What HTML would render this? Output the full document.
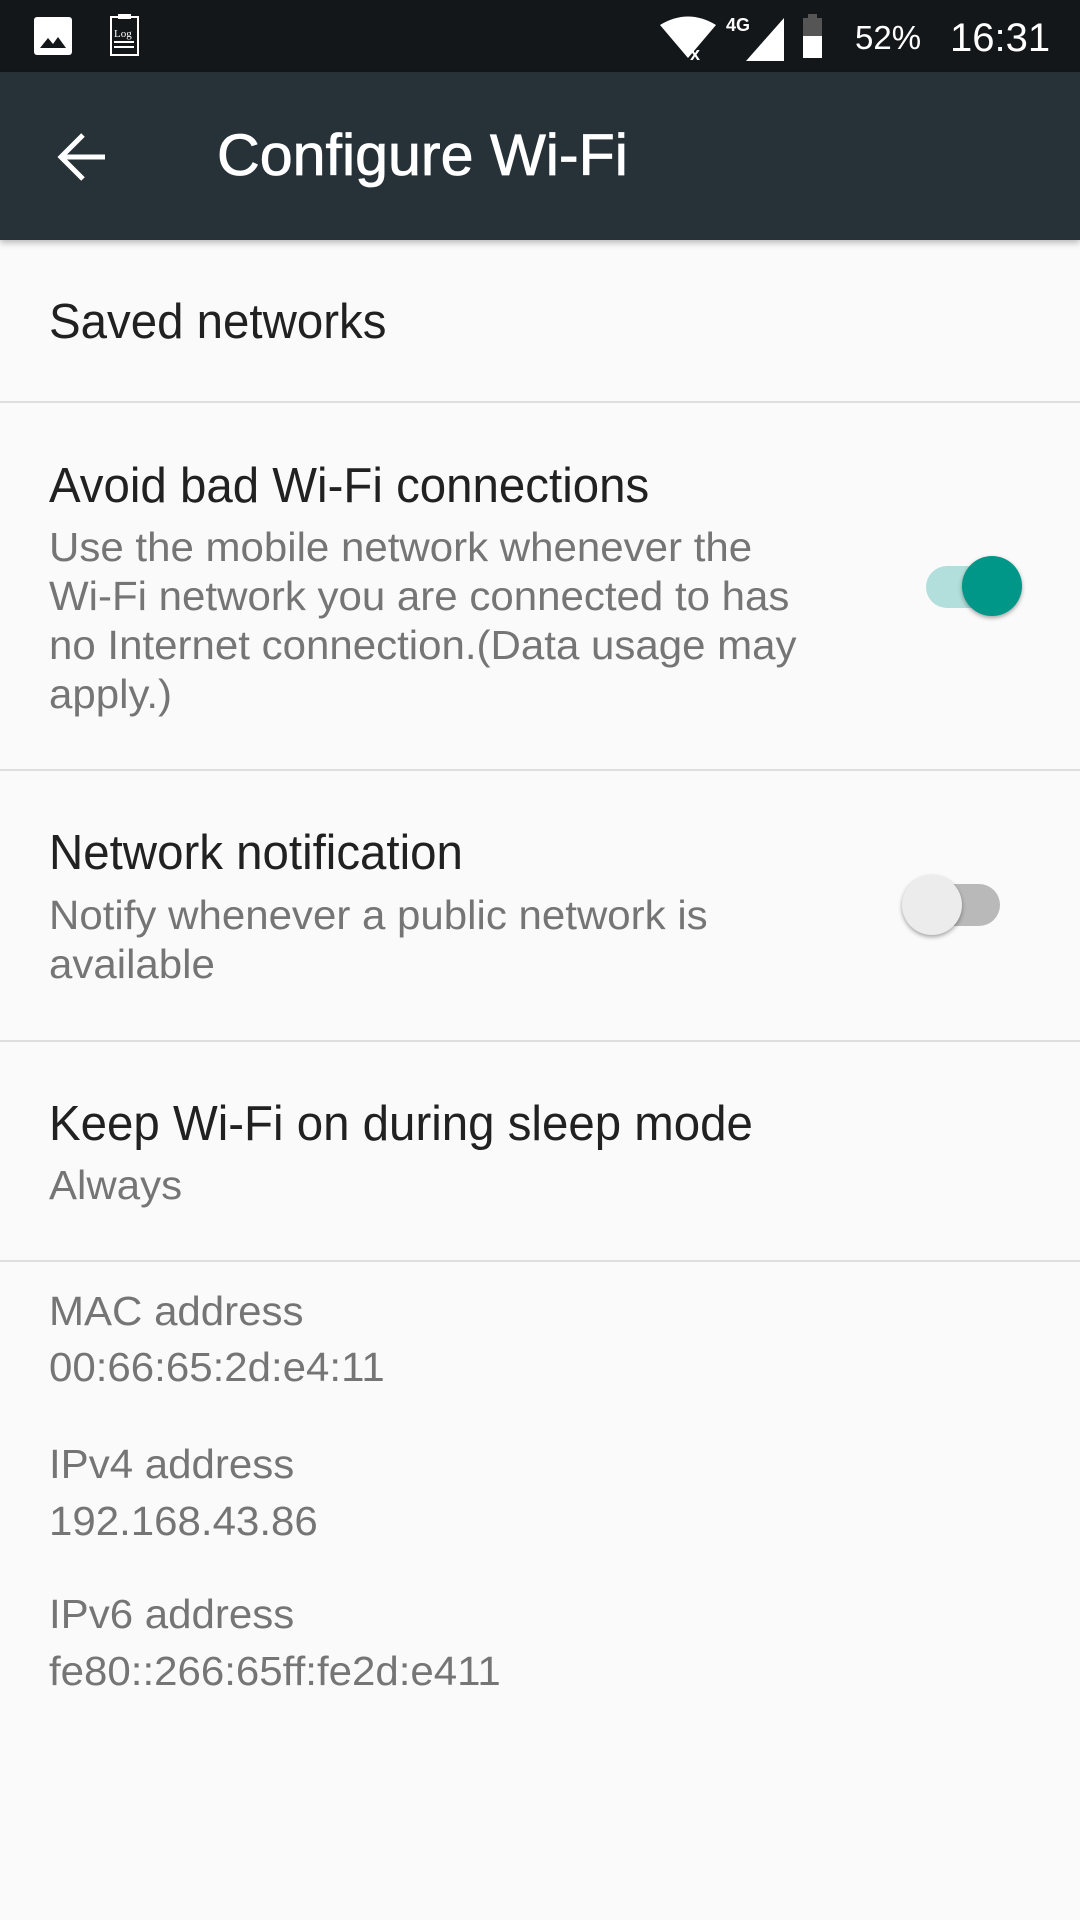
<!DOCTYPE html>
<html><head><meta charset="utf-8"><style>
body{margin:0;width:1080px;height:1920px;background:#fafafa;position:relative;overflow:hidden;font-family:"Liberation Sans",sans-serif}
.sb{position:absolute;left:0;top:0;width:1080px;height:72px;background:#141719}
.tb{position:absolute;left:0;top:72px;width:1080px;height:168px;background:#263238;box-shadow:0 3px 6px rgba(0,0,0,.25)}
.t{position:absolute;left:49px;white-space:nowrap;transform-origin:left center}
.p{font-size:49px;color:#212121;line-height:60px;transform:scaleX(0.968)}
.s{font-size:41px;color:#757575;line-height:49px;transform:scaleX(1.025)}
.d{position:absolute;left:0;width:1080px;height:2px;background:#dedede}
</style></head><body>
<div class="sb">
<svg width="1080" height="72" style="position:absolute;left:0;top:0">
<rect x="34" y="17" width="38" height="38" rx="3" fill="#fff"/>
<path d="M40 48 L48 38 L53 44 L58 37 L66 48Z" fill="#141719"/>
<rect x="111" y="17" width="27" height="38" fill="none" stroke="#fff" stroke-width="2"/>
<rect x="118" y="14" width="13" height="5" fill="#fff"/>
<text x="114" y="37" font-size="11" fill="#fff" font-family="Liberation Serif">Log</text>
<rect x="114" y="41" width="20" height="2" fill="#fff"/><rect x="114" y="46" width="20" height="2" fill="#fff"/>
<path d="M660 25 Q688 8 716 25 L688 58Z" fill="#fff"/>
<text x="690" y="60" font-size="18" font-weight="bold" fill="#fff">x</text>
<text x="726" y="31" font-size="18" font-weight="bold" fill="#fff">4G</text>
<path d="M746 61 L784 18 L784 61Z" fill="#fff"/>
<rect x="808" y="14" width="9" height="5" fill="#555"/>
<rect x="803" y="18" width="19" height="18" fill="#555"/>
<rect x="803" y="36" width="19" height="22" fill="#fff"/>
<text x="855" y="49" font-size="33" fill="#fff">52%</text>
<text x="950" y="51" font-size="40" fill="#fff">16:31</text>
</svg>
</div>
<div class="tb">
<svg width="60" height="60" style="position:absolute;left:55px;top:55px"><path d="M50 30H8M28 8L6 30L28 52" fill="none" stroke="#fff" stroke-width="5"/></svg>
<div style="position:absolute;left:217px;top:52px;font-size:58px;line-height:64px;color:#fff;transform:scaleX(1.02);transform-origin:left center;white-space:nowrap;-webkit-text-stroke:0.8px #fff">Configure Wi-Fi</div>
</div>
<div class="t p" style="top:292px">Saved networks</div>
<div class="d" style="top:401px"></div>
<div class="t p" style="top:456px">Avoid bad Wi-Fi connections</div>
<div class="t s" style="top:523px">Use the mobile network whenever the<br>Wi-Fi network you are connected to has<br>no Internet connection.(Data usage may<br>apply.)</div>
<div style="position:absolute;left:926px;top:566px;width:74px;height:42px;border-radius:21px;background:#b2dfdb"></div>
<div style="position:absolute;left:962px;top:556px;width:60px;height:60px;border-radius:50%;background:#009688;box-shadow:0 2px 4px rgba(0,0,0,.35)"></div>
<div class="d" style="top:769px"></div>
<div class="t p" style="top:823px">Network notification</div>
<div class="t s" style="top:891px">Notify whenever a public network is<br>available</div>
<div style="position:absolute;left:926px;top:884px;width:74px;height:42px;border-radius:21px;background:#b9b9b9"></div>
<div style="position:absolute;left:902px;top:875px;width:60px;height:60px;border-radius:50%;background:#ececec;box-shadow:0 2px 4px rgba(0,0,0,.35)"></div>
<div class="d" style="top:1040px"></div>
<div class="t p" style="top:1094px">Keep Wi-Fi on during sleep mode</div>
<div class="t s" style="top:1161px">Always</div>
<div class="d" style="top:1260px"></div>
<div class="t s" style="top:1287px">MAC address</div>
<div class="t s" style="top:1343px">00:66:65:2d:e4:11</div>
<div class="t s" style="top:1440px">IPv4 address</div>
<div class="t s" style="top:1497px">192.168.43.86</div>
<div class="t s" style="top:1590px">IPv6 address</div>
<div class="t s" style="top:1647px">fe80::266:65ff:fe2d:e411</div>
</body></html>
